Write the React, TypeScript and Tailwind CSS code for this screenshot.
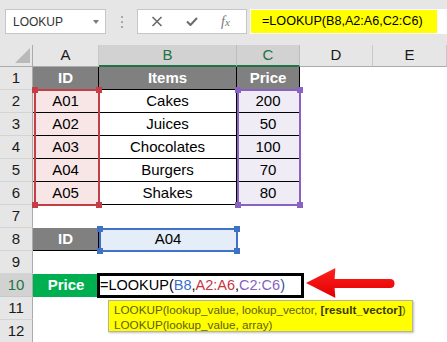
const data = [
  { id: "A01", item: "Cakes", price: "200" },
  { id: "A02", item: "Juices", price: "50" },
  { id: "A03", item: "Chocolates", price: "100" },
  { id: "A04", item: "Burgers", price: "70" },
  { id: "A05", item: "Shakes", price: "80" },
];

function FormulaBar() {
  return (
    <div className="flex h-[45px] items-start bg-[#e6e6e6] pt-[9px]">
      {/* Name box */}
      <div className="ml-[5px] flex h-[25px] w-[101px] items-center justify-between border border-[#c6c6c6] bg-white pl-[7px] pr-[6px] text-[12px] text-[#333]">
        <span>LOOKUP</span>
        <span className="h-0 w-0 border-x-[3.5px] border-t-[4px] border-x-transparent border-t-[#7a7a7a]" />
      </div>
      {/* Grip */}
      <div className="flex h-[25px] w-[31px] flex-col items-center justify-center gap-[3px]">
        <span className="h-[2px] w-[2px] bg-[#a8a8a8]" />
        <span className="h-[2px] w-[2px] bg-[#a8a8a8]" />
        <span className="h-[2px] w-[2px] bg-[#a8a8a8]" />
      </div>
      {/* Cancel / enter / fx */}
      <div className="flex h-[25px] w-[110px] items-center gap-[23px] border border-[#c6c6c6] bg-white pl-[13px] text-[#6a6a6a]">
        <svg width="12" height="11" viewBox="0 0 12 11" fill="none" stroke="currentColor" strokeWidth="1.6">
          <path d="M1.5 1L10.5 10" />
          <path d="M10.5 1L1.5 10" />
        </svg>
        <svg width="12" height="9" viewBox="0 0 12 9" fill="none" stroke="currentColor" strokeWidth="2">
          <path d="M1 4.5L4.5 8L11 1" />
        </svg>
        <span className="font-['Liberation_Serif',serif] text-[14px] italic leading-none text-[#777]">
          f<span className="text-[11px]">x</span>
        </span>
      </div>
      {/* Formula input */}
      <div className="ml-[3px] flex h-[25px] flex-1 items-start bg-white pl-[1px] pt-[1px]">
        <div className="flex h-[23px] w-[186px] items-center bg-[#ffff00] pl-[11px] text-[12.6px] text-black">
          =LOOKUP(B8,A2:A6,C2:C6)
        </div>
      </div>
    </div>
  );
}

function ColHead({ label, active }: { label: string; active?: boolean }) {
  return (
    <div
      className={
        active
          ? "flex items-center justify-center border-r border-b-2 border-r-[#bdbdbd] border-b-[#217346] bg-[#d2d2d2] text-[15px] text-[#217346]"
          : "flex items-center justify-center border-r border-b border-r-[#c8c8c8] border-b-[#ababab] bg-[#e6e6e6] text-[15px] text-[#1a1a1a]"
      }
    >
      {label}
    </div>
  );
}

function RowHead({ n, active }: { n: number; active?: boolean }) {
  return (
    <div
      className={
        active
          ? "flex items-center justify-center border-r border-b border-r-[#ababab] border-b-[#c8c8c8] bg-[#d2d2d2] text-[15px] text-[#217346]"
          : "flex items-center justify-center border-r border-b border-r-[#ababab] border-b-[#d4d4d4] bg-[#e6e6e6] text-[15px] text-[#1a1a1a]"
      }
    >
      {n}
    </div>
  );
}

function RangeBox({ box, handle }: { box: string; handle: string }) {
  return (
    <div className={`absolute border-2 ${box}`}>
      <span className={`absolute -left-[4px] -top-[4px] h-[6px] w-[6px] ${handle}`} />
      <span className={`absolute -right-[4px] -top-[4px] h-[6px] w-[6px] ${handle}`} />
      <span className={`absolute -bottom-[4px] -left-[4px] h-[6px] w-[6px] ${handle}`} />
      <span className={`absolute -bottom-[4px] -right-[4px] h-[6px] w-[6px] ${handle}`} />
    </div>
  );
}

function Sheet() {
  const head = "flex items-center justify-center border-r border-b border-black bg-[#808080] font-bold text-white";
  return (
    <div className="relative grid grid-cols-[33px_66px_138px_63px_73px_74px] grid-rows-[22px_repeat(12,23px)] text-[15px]">
      {/* Column headers */}
      <div className="relative border-r border-b border-r-[#ababab] border-b-[#ababab] bg-[#e6e6e6]">
        <svg className="absolute left-[15px] top-[3px]" width="15" height="15" viewBox="0 0 15 15">
          <path d="M15 0L15 15L0 15Z" fill="#b9b9b9" />
        </svg>
      </div>
      <ColHead label="A" />
      <ColHead label="B" active />
      <ColHead label="C" active />
      <ColHead label="D" />
      <ColHead label="E" />

      {/* Row 1: table header */}
      <RowHead n={1} />
      <div className={head}>ID</div>
      <div className={head}>Items</div>
      <div className={head}>Price</div>
      <div />
      <div />

      {/* Rows 2-6 */}
      {data.map((r, i) => (
        <div key={r.id} className="contents">
          <RowHead n={i + 2} />
          <div className="flex items-center justify-center border-r border-b border-black bg-[#f8e6e7]">{r.id}</div>
          <div className="flex items-center justify-center border-r border-b border-black bg-white">{r.item}</div>
          <div className="flex items-center justify-center border-r border-b border-black bg-[#f0ecf6]">{r.price}</div>
          <div />
          <div />
        </div>
      ))}

      {/* Row 7 */}
      <RowHead n={7} />
      <div />
      <div />
      <div />
      <div />
      <div />

      {/* Row 8 */}
      <RowHead n={8} />
      <div className={head}>ID</div>
      <div className="flex items-center justify-center bg-[#e5edf8]">A04</div>
      <div />
      <div />
      <div />

      {/* Row 9 */}
      <RowHead n={9} />
      <div />
      <div />
      <div />
      <div />
      <div />

      {/* Row 10 */}
      <RowHead n={10} active />
      <div className="flex items-center justify-center bg-[#00b050] font-bold text-white">Price</div>
      <div />
      <div />
      <div />
      <div />

      {/* Rows 11-12 */}
      {[11, 12].map((n) => (
        <div key={n} className="contents">
          <RowHead n={n} />
          <div />
          <div />
          <div />
          <div />
          <div />
        </div>
      ))}

      {/* Reference highlights */}
      <RangeBox box="left-[34px] top-[44px] h-[117px] w-[66px] border-[#c43e48]" handle="bg-[#c43e48]" />
      <RangeBox box="left-[237px] top-[44px] h-[117px] w-[64px] border-[#8a63c2]" handle="bg-[#8a63c2]" />
      <RangeBox box="left-[99px] top-[183px] h-[24px] w-[139px] border-[#3f71c6]" handle="bg-[#3f71c6]" />

      {/* Cell in edit mode */}
      <div className="absolute left-[97px] top-[228px] flex h-[25px] w-[207px] items-center border-[3px] border-black bg-white text-[14.5px] leading-none">
        <span>=LOOKUP(</span>
        <span className="text-[#3d6fc9]">B8</span>
        <span>,</span>
        <span className="text-[#c8343f]">A2:A6</span>
        <span>,</span>
        <span className="text-[#8a5fc0]">C2:C6</span>
        <span className="text-[#2f55a0]">)</span>
      </div>

      {/* Function tooltip */}
      <div className="absolute left-[108px] top-[255px] h-[32px] w-[305px] border border-[#b4b4a0] bg-[#ffff00] pl-[5px] pt-[1px] text-[11.7px] leading-[15px] text-[#5e5e12] shadow-[1px_1px_2px_rgba(0,0,0,0.25)]">
        <div>
          LOOKUP(lookup_value, lookup_vector, <span className="font-bold text-[#3a3a00]">[result_vector]</span>)
        </div>
        <div>LOOKUP(lookup_value, array)</div>
      </div>

      {/* Pointer arrow */}
      <svg className="absolute left-[304px] top-[221px]" width="92" height="34" viewBox="0 0 92 34">
        <defs>
          <linearGradient id="arrowFill" x1="0" y1="0" x2="0" y2="1">
            <stop offset="0" stopColor="#ff2020" />
            <stop offset="1" stopColor="#e00000" />
          </linearGradient>
        </defs>
        <path
          d="M2 17L30.5 2.5Q31.5 2 31.3 3.2L30.6 13L86 13Q90.5 13 90.5 17.5Q90.5 22 86 22L30.6 22L31.3 30.8Q31.5 32 30.5 31.5Z"
          fill="url(#arrowFill)"
        />
      </svg>
    </div>
  );
}

export default function App() {
  return (
    <div className="relative h-[342px] w-[447px] overflow-hidden bg-white font-['Liberation_Sans',Arial,sans-serif] text-black">
      <FormulaBar />
      <Sheet />
    </div>
  );
}
